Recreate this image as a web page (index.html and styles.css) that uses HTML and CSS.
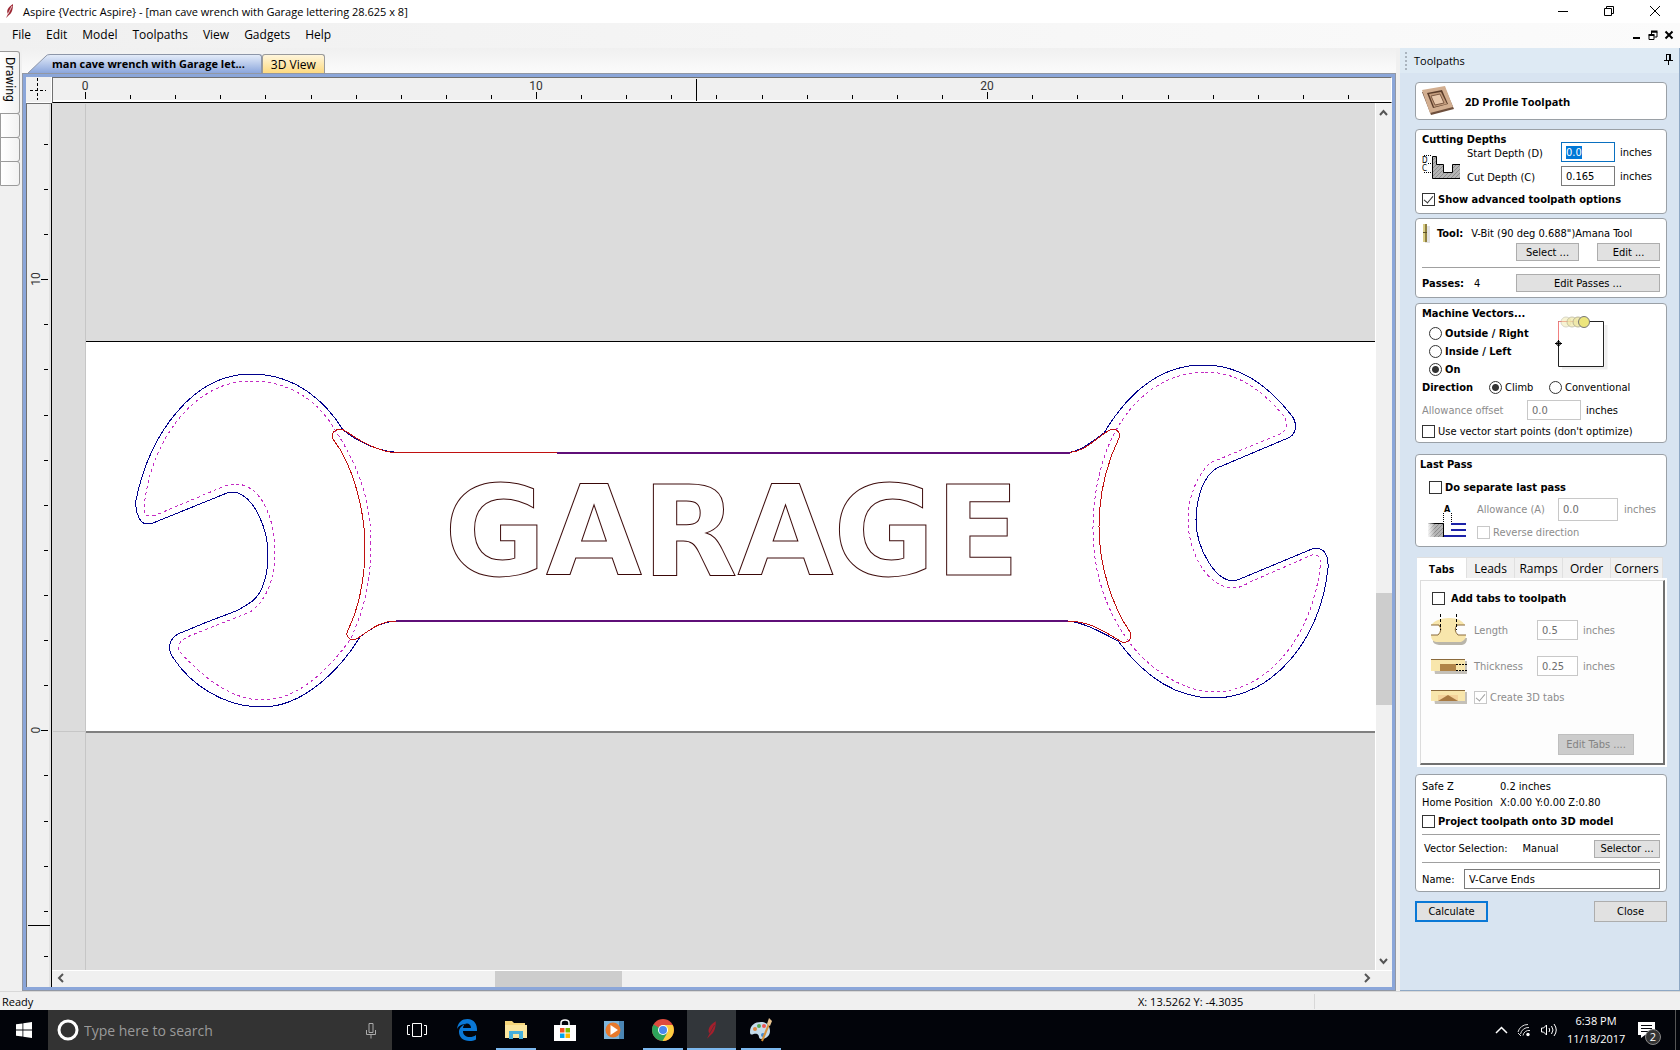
FILE: index.html
```html
<!DOCTYPE html>
<html lang="en">
<head>
    <meta charset="utf-8">
    <title>Aspire</title>
    <link rel="stylesheet" href="styles.css">
</head>
<body>

    <header class="titlebar">
        <svg class="app-icon" width="8" height="14" viewBox="0 0 8 14"><path d="M7 0C2 3 0 7 2 10L0 14 3 11C6 9 7 5 7 0Z" fill="#9c2733"/><path d="M6 2L2 10" stroke="#e8c4c8"/></svg>
        <span class="title">Aspire {Vectric Aspire} - [man cave wrench with Garage lettering 28.625 x 8]</span>
        <button class="win-btn" aria-label="Minimize"><svg width="12" height="12"><path d="M1 6.500H11" stroke="#000"/></svg></button>
        <button class="win-btn" aria-label="Restore"><svg width="12" height="12"><path d="M1.500 3.500h7v7h-7zM3.500 3.500v-2h7v7h-2" fill="none" stroke="#000"/></svg></button>
        <button class="win-btn" aria-label="Close"><svg width="12" height="12"><path d="M1 1L11 11M11 1L1 11" stroke="#000"/></svg></button>
    </header>

    <nav class="menubar">
        <a href="#">File</a>
        <a href="#">Edit</a>
        <a href="#">Model</a>
        <a href="#">Toolpaths</a>
        <a href="#">View</a>
        <a href="#">Gadgets</a>
        <a href="#">Help</a>
        <div class="mdi">
            <button aria-label="Minimize drawing"><svg width="10" height="10"><path d="M1 8H8" stroke="#000" stroke-width="2"/></svg></button>
            <button aria-label="Restore drawing"><svg width="10" height="10"><path d="M1 5.500h5v4h-5zM3.500 5V2H9v5H6.500" fill="none" stroke="#000"/><path d="M3 1.500H9.500M.5 5H6.500" stroke="#000" stroke-width="2"/></svg></button>
            <button aria-label="Close drawing"><svg width="10" height="10"><path d="M1.500 1.500L8.500 8.500M8.500 1.500L1.500 8.500" stroke="#000" stroke-width="2"/></svg></button>
        </div>
    </nav>

    <main class="workspace">

        <aside class="side-tabs">
            <button class="side-tab drawing">Drawing</button>
            <button class="side-tab" aria-label="Modeling"></button>
            <button class="side-tab" aria-label="Clipart"></button>
            <button class="side-tab" aria-label="Layers"></button>
        </aside>

        <section class="document">
            <div class="doc-tabs">
                <button class="doc-tab active">
                    <svg class="tab-slope" width="22" height="19"><defs><linearGradient id="blue" x2="0" y2="1"><stop offset="0" stop-color="#e4ecf9"/><stop offset="1" stop-color="#8ba6dc"/></linearGradient></defs><path d="M0 19L18 2Q19 .5 22 .5V19Z" fill="url(#blue)"/><path d="M0 19L18 2Q19 .5 22 .5" fill="none" stroke="#8d96a8"/></svg>
                    <span>man cave wrench with Garage let...</span>
                </button>
                <button class="doc-tab yellow">3D View</button>
            </div>

            <div class="frame">
                <div class="corner">
                    <svg width="25" height="25"><path d="M11.500 1v22M4 13.500h16" stroke="#000" stroke-dasharray="3 2"/></svg>
                </div>
                <div class="ruler-h">
                    <svg class="fill">
                        <path class="tick" d="M33.500 15v7M78.500 18v4M123.500 18v4M168.500 18v4M213.500 18v4M259.500 18v4M304.500 18v4M349.500 18v4M394.500 18v4M439.500 18v4M484.500 15v7M529.500 18v4M574.500 18v4M619.500 18v4M664.500 18v4M710.500 18v4M755.500 18v4M800.500 18v4M845.500 18v4M890.500 18v4M935.500 15v7M980.500 18v4M1025.500 18v4M1070.500 18v4M1116.500 18v4M1161.500 18v4M1206.500 18v4M1251.500 18v4M1296.500 18v4M644.500 2v22"/>
                        <text x="33" y="13">0</text>
                        <text x="484" y="13">10</text>
                        <text x="935" y="13">20</text>
                    </svg>
                </div>
                <div class="ruler-v">
                    <svg class="fill">
                        <path class="tick" d="M18 41.500h4M18 86.500h4M18 131.500h4M15 176.500h7M18 221.500h4M18 266.500h4M18 312.500h4M18 357.500h4M18 402.500h4M18 447.500h4M18 492.500h4M18 537.500h4M18 582.500h4M15 627.500h7M18 672.500h4M18 718.500h4M18 763.500h4M18 808.500h4M18 853.500h4M2 822.500h22"/>
                        <text transform="translate(14 176) rotate(-90)">10</text>
                        <text transform="translate(14 627) rotate(-90)">0</text>
                    </svg>
                </div>
                <div class="canvas">
                    <svg class="fill">
                        <g transform="translate(-52 -103)">
                            <!-- material sheet and origin lines -->
                            <path d="M53 731.500H86M85.500 104V2000" stroke="#c6c6c6"/>
                            <rect x="86" y="341" width="1500" height="391" fill="#fff"/>
                            <path d="M86 341.500H1600" stroke="#000"/>
                            <path d="M86 732H1600" stroke="#808080" stroke-width="2"/>
                            <!-- wrench outline -->
                            <g class="outline">
                                <path d="M394 452C374 450 356 440 343 430C326 402 296 374 251 374C193 374 150 433 136 500C135 515 141 524 147 524Q150 524 153 523L227 493Q232 491 238 493C256 500 268 530 268 555C268 580 260 598 248 604Q242 608 236 611L207 622 178 634C168 640 167 650 174 659C190 683 222 707 262 707C303 707 340 670 360 637C371 628 384 621 398 621"/>
                                <path d="M1068 452.500C1082 451 1094 440 1104 433C1125 398 1157 365 1203 365C1243 365 1270 388 1292 416C1298 424 1296 435 1288 438L1217 468C1203 476 1196 499 1196 520C1196 548 1215 581 1234 581L1240 579 1312 549C1322 546 1329 553 1328 568C1321 640 1272 698 1214 698C1170 698 1138 668 1118 641C1104 634 1085 622 1066 621"/>
                            </g>
                            <!-- inset pass -->
                            <g class="inset">
                                <path d="M250 381C296 381 322 407 335 430C358 465 371 500 371 545C371 585 362 615 350 640C330 667 300 700 262 700C230 700 201 675 180 652Q175 644 187 637L250 612C268 600 275 575 275 552C275 520 262 484 235 484Q228 484 220 488L156 515Q144 519 144 508C150 440 195 381 250 381Z"/>
                                <path d="M1205 372C1240 372 1264 393 1283 415Q1292 428 1280 434L1210 463C1195 478 1188 500 1188 520C1188 550 1206 588 1234 588Q1240 588 1250 582L1312 555Q1322 553 1320 568C1311 640 1265 692 1214 692C1180 692 1145 664 1130 643C1105 610 1093 570 1093 530C1093 495 1100 460 1115 432C1135 395 1168 372 1205 372Z"/>
                            </g>
                            <!-- handle -->
                            <g class="handle">
                                <path d="M558 452.500H394C376 451 360 441 347 432C339 426 330 431 333 439C353 465 365 510 365 548C365 580 358 610 348 630C344 638 352 642 358 638C370 630 380 621 396 621"/>
                                <path d="M1068 452.500C1086 452 1098 436 1110 430C1116 428 1121 432 1119 438C1106 465 1099 492 1099 527C1099 565 1112 606 1130 632C1133 638 1128 644 1122 642C1104 632 1092 621 1066 621"/>
                            </g>
                            <path d="M557 453H1070M396 621H1068" stroke="#5f0f78" stroke-width="2"/>
                            <text class="lettering" x="732" y="575">GARAGE</text>
                        </g>
                    </svg>
                </div>
                <div class="scroll-v">
                    <svg width="16" height="18"><path d="M4 12L7.500 8 11 12" fill="none" stroke="#555" stroke-width="2"/></svg>
                    <div class="thumb-v"></div>
                    <svg class="down" width="16" height="18"><path d="M4 7L7.500 11 11 7" fill="none" stroke="#555" stroke-width="2"/></svg>
                </div>
                <div class="scroll-h">
                    <svg width="17" height="16"><path d="M11 3L7 7 11 11" fill="none" stroke="#555" stroke-width="2"/></svg>
                    <div class="thumb-h"></div>
                    <svg class="right" width="17" height="16"><path d="M6 3L10 7 6 11" fill="none" stroke="#555" stroke-width="2"/></svg>
                </div>
            </div>
        </section>

        <section class="panel">
            <div class="panel-head">
                <span class="grip"></span>
                <span>Toolpaths</span>
                <svg class="pin" width="9" height="11"><path d="M2.500 0v6M6 0v6M2 .5h5M0 6.500h9M4.500 7v4" stroke="#000" fill="none"/><path d="M6 0v6" stroke="#000" stroke-width="2"/></svg>
            </div>

            <form class="panel-body" onsubmit="return false">

                <div class="card heading-card">
                    <svg width="34" height="30" viewBox="0 0 34 30"><path d="M1 6L24 2 33 23 10 29Z" fill="#6e4f3c"/><path d="M1 4L24 0 32 21 9 27Z" fill="#d2ae90"/><path d="M6 7L21 4 27 18 12 22Z" fill="#5a3c2a"/><path d="M8 8L20 6 26 18 13 21Z" fill="#c39c7d"/><path d="M10 10L19 8 23 17 14 19Z" fill="#e8c8ac" stroke="#7d5a44"/></svg>
                    <b>2D Profile Toolpath</b>
                </div>

                <div class="card depths">
                    <b class="card-title">Cutting Depths</b>
                    <div class="depth-grid">
                        <svg class="depth-icon" width="38" height="24" viewBox="0 0 38 24">
                            <defs><pattern id="hatch" width="4" height="4" patternUnits="userSpaceOnUse"><rect width="4" height="4" fill="#b4b4b4"/><path d="M-1 5L5-1" stroke="#8c8c8c"/></pattern></defs>
                            <path d="M10.500 1.500h4v8h7v8h9v-8h8v14h-28z" fill="url(#hatch)"/><path d="M38 23.500H10.500V1.500h4v8h7v8h9v-8h8" fill="none" stroke="#000"/>
                            <path d="M2 .5H10M6 8.500H10M2 17.500H10" stroke="#000" stroke-dasharray="1 1"/><text x="0" y="8">D</text><text x="0" y="16">C</text></svg>
                        <label for="start">Start Depth (D)</label><input type="text" id="start" value="0.0"><span>inches</span>
                        <label for="cut">Cut Depth (C)</label><input type="text" id="cut" value="0.165"><span>inches</span>
                    </div>
                    <label class="check"><input type="checkbox" checked><b>Show advanced toolpath options</b></label>
                </div>

                <div class="card tool">
                    <div class="tool-row">
                        <svg width="8" height="19"><rect x="3" y="2" width="5" height="17" fill="#e2e2e2"/><rect x="1" width="4" height="18" fill="#8f8040"/><rect x="1" width="2" height="18" fill="#d9cd86"/><path d="M1 8.500h4" stroke="#5d5328"/></svg>
                        <b>Tool:</b><span>V-Bit (90 deg 0.688")Amana Tool</span>
                    </div>
                    <div class="tool-buttons"><button>Select ...</button><button>Edit ...</button></div>
                    <hr>
                    <div class="passes"><b>Passes:</b><span>4</span><button>Edit Passes ...</button></div>
                </div>

                <div class="card vectors">
                    <div class="vector-top">
                        <div>
                            <b class="card-title">Machine Vectors...</b>
                            <label class="check"><input type="radio" name="side"><b>Outside / Right</b></label>
                            <label class="check"><input type="radio" name="side"><b>Inside / Left</b></label>
                            <label class="check"><input type="radio" name="side" checked><b>On</b></label>
                        </div>
                        <svg width="56" height="56"><path d="M8 53h44V10" fill="none" stroke="#eee" stroke-width="3"/><path d="M4.500 6.500h45v45h-45z" fill="#fff" stroke="#222"/><path d="M4.500 28V6.500H26" fill="none" stroke="#f08080"/><g fill="#f0e9a8" stroke="#b5b090"><circle cx="12" cy="7" r="5" opacity=".5"/><circle cx="18" cy="7" r="5" opacity=".7"/><circle cx="24" cy="7" r="5" opacity=".9"/></g><circle cx="30" cy="7" r="5.500" fill="#ece57c" stroke="#777"/><path d="M1 28.500h7M4.500 25v7" stroke="#000"/><circle cx="4.500" cy="28.500" r="2" fill="none" stroke="#000"/></svg>
                    </div>
                    <div class="direction">
                        <b>Direction</b>
                        <label class="check"><input type="radio" name="dir" checked>Climb</label>
                        <label class="check"><input type="radio" name="dir">Conventional</label>
                    </div>
                    <div class="offset"><label class="dim" for="offset">Allowance offset</label><input type="text" id="offset" value="0.0" disabled><span>inches</span></div>
                    <label class="check"><input type="checkbox">Use vector start points (don't optimize)</label>
                </div>

                <div class="card last-pass">
                    <b class="card-title">Last Pass</b>
                    <label class="check"><input type="checkbox"><b>Do separate last pass</b></label>
                    <div class="pass-grid">
                        <svg class="pass-icon" width="40" height="34"><defs><linearGradient id="fade"><stop offset="0" stop-color="#fff"/><stop offset=".5" stop-color="#fff" stop-opacity="0"/></linearGradient></defs><rect x="1" y="19" width="16" height="14" fill="url(#hatch)"/><path d="M1 19.500H16.500V33" fill="none" stroke="#000"/><rect x="0" y="18" width="16" height="16" fill="url(#fade)"/><path d="M16.500 9v10M24.500 9v10" stroke="#000" stroke-dasharray="1 1"/><path d="M24 20H39M24 26H39M17 32H39" stroke="#1c22a8" stroke-width="2"/><text x="17" y="8">A</text></svg>
                        <label class="dim" for="allow">Allowance (A)</label><input type="text" id="allow" value="0.0" disabled><span class="dim">inches</span>
                        <label class="check dim reverse"><input type="checkbox" disabled>Reverse direction</label>
                    </div>
                </div>

                <div class="tabs">
                    <div class="tab-strip">
                        <button class="selected">Tabs</button><button>Leads</button><button>Ramps</button><button>Order</button><button>Corners</button>
                    </div>
                    <div class="tab-frame">
                        <div class="tab-page">
                            <label class="check add"><input type="checkbox"><b>Add tabs to toolpath</b></label>
                            <div class="tab-grid">
                                <svg width="38" height="32" viewBox="0 0 38 32"><path d="M3 26Q2 30 9 31H32Q37 30 37 24Z" fill="#b9b5aa"/><path d="M1 11Q5 5 18 4Q30 3 35 11H28Q23 16 28 21H36Q36 26 31 28H6Q1 27 1 21H8Q12 16 8 11Z" fill="#f8e6ac"/><path d="M1 11H9Q13 16 8 21H1M35 11H27Q23 16 28 21H36" fill="none" stroke="#8a6a3c"/><path d="M10.500 0v16M26.500 0v16" stroke="#000" stroke-dasharray="3 2"/></svg>
                                <label class="dim" for="len">Length</label><input type="text" id="len" value="0.5" disabled><span class="dim">inches</span>
                                <svg width="38" height="17" viewBox="0 0 38 17"><path d="M3 3H37V16H5Z" fill="#c4c0b8"/><path d="M1 1H35V13H1Z" fill="#f8e6ac"/><path d="M1 1.500H35" stroke="#8a6a3c"/><path d="M10 6H26V13H10Z" fill="#b08448"/><path d="M26 6.500H38M26 12.500H38" stroke="#000" stroke-dasharray="2 1"/></svg>
                                <label class="dim" for="thick">Thickness</label><input type="text" id="thick" value="0.25" disabled><span class="dim">inches</span>
                                <svg width="38" height="17" viewBox="0 0 38 17"><path d="M3 3H37V15H5Z" fill="#c4c0b8"/><path d="M1 1H35V12H1Z" fill="#f8e6ac"/><path d="M1 1.500H35" stroke="#8a6a3c"/><path d="M8 6H28V12H8Z" fill="#f3d29a"/><path d="M8 12L18 6 28 12Z" fill="#a87a42"/></svg>
                                <label class="check dim wide"><input type="checkbox" checked disabled>Create 3D tabs</label>
                            </div>
                            <button class="edit-tabs" disabled>Edit Tabs ....</button>
                        </div>
                    </div>
                </div>

                <div class="card summary">
                    <div class="pair"><span>Safe Z</span><span>0.2 inches</span></div>
                    <div class="pair"><span>Home Position</span><span>X:0.00 Y:0.00 Z:0.80</span></div>
                    <label class="check"><input type="checkbox"><b>Project toolpath onto 3D model</b></label>
                    <hr>
                    <div class="selection"><span>Vector Selection:</span><span>Manual</span><button>Selector ...</button></div>
                    <hr>
                    <div class="name-row"><label for="name">Name:</label><input type="text" id="name" value="V-Carve Ends"></div>
                </div>

                <div class="actions"><button class="primary">Calculate</button><button>Close</button></div>
            </form>
        </section>
    </main>

    <footer class="statusbar">
        <span>Ready</span>
        <span class="coords">X: 13.5262 Y: -4.3035</span>
    </footer>

    <div class="taskbar">
        <button class="start" aria-label="Start"><svg width="16" height="16"><path d="M0 2.300L6.500 1.400V7.600H0zM7.300 1.300L16 0V7.600H7.300zM0 8.400H6.500V14.600L0 13.700zM7.300 8.400H16V16L7.300 14.700z" fill="#fff"/></svg></button>
        <div class="search">
            <svg width="22" height="22"><circle cx="11" cy="11" r="9" fill="none" stroke="#fff" stroke-width="3"/></svg>
            <input type="text" placeholder="Type here to search" aria-label="Search">
            <svg width="12" height="17"><path d="M4 1.500h4v9h-4zM1.500 8v4.500h9V8M6 12.500v4" fill="none" stroke="#aaa"/></svg>
        </div>
        <button class="task view" aria-label="Task View"><svg width="20" height="16"><path d="M5.500 1.500h9v13h-9zM3 3.500H.5v9H3M17 3.500h2.500v9H17" fill="none" stroke="#fff"/></svg></button>
        <button class="task" aria-label="Edge"><svg width="22" height="22" viewBox="0 0 22 22"><path d="M1 10C2 3 6 0 11.500 0 18 0 21.500 5 21 12H7C7 16 10 18 14 18 16 18 18 17.500 20 16V20.500C18 21.500 16 22 13.500 22 7 22 3 18 3 13 3 9 6 6 10 5 7 5 3 6 1 10ZM7 9H15C15 6 13 4.500 11 4.500S7 6.500 7 9Z" fill="#0a78d6"/></svg></button>
        <button class="task open" aria-label="File Explorer"><svg width="22" height="20"><path d="M0 1H7L9 3H20V17H0Z" fill="#f5d67b"/><path d="M0 5H22V18H0Z" fill="#fbe69e"/><path d="M4 11H18V19H14V14H8V19H4Z" fill="#46b0dc"/></svg></button>
        <button class="task" aria-label="Store"><svg width="22" height="22"><path d="M7 6V4Q7 1 11 1T15 4V6" fill="none" stroke="#fff" stroke-width="1.500"/><path d="M0 6H22V22H0Z" fill="#fff"/><path d="M6 9h4.500v4.500H6z" fill="#f25022"/><path d="M11.500 9H16v4.500h-4.500z" fill="#7fba00"/><path d="M6 14.500h4.500V19H6z" fill="#00a4ef"/><path d="M11.500 14.500H16V19h-4.500z" fill="#ffb900"/></svg></button>
        <button class="task" aria-label="Media Player"><svg width="20" height="20"><path d="M0 1H20V19H0Z" fill="#7fb5da"/><path d="M15 1h5v18h-5z" fill="#4b86b4"/><circle cx="9" cy="10" r="7.500" fill="#e8792b"/><path d="M6.500 5L14 10 6.500 15Z" fill="#fff"/></svg></button>
        <button class="task open" aria-label="Chrome"><svg width="22" height="22" viewBox="0 0 22 22"><circle cx="11" cy="11" r="11" fill="#dd4b3e"/><path d="M11 11L1.500 5.500A11 11 0 0 0 11 22L16 13Z" fill="#2da35a"/><path d="M11 11L20.700 6A11 11 0 0 1 10.500 22L15.500 13.500Z" fill="#fccd3f"/><path d="M11 6h9.700L16 11Z" fill="#fccd3f"/><circle cx="11" cy="11" r="5" fill="#fff"/><circle cx="11" cy="11" r="4" fill="#4a88ee"/></svg></button>
        <button class="task open current" aria-label="Aspire"><svg width="10" height="20" viewBox="0 0 8 14"><path d="M7 0C2 3 0 7 2 10L0 14 3 11C6 9 7 5 7 0Z" fill="#a51f2c"/><path d="M6 3L2 10" stroke="#32363a" stroke-width=".5"/></svg></button>
        <button class="task open" aria-label="Paint"><svg width="24" height="24"><path d="M1 14C1 7 6 4 12 4S21 8 21 13 17 21 12 21C9 21 11 17 8 16S1 19 1 14Z" fill="#c4dcec"/><circle cx="6" cy="11" r="2" fill="#d84"/><circle cx="10" cy="8" r="2" fill="#5a5"/><circle cx="15" cy="8" r="2" fill="#e55"/><circle cx="14" cy="17" r="2" fill="#48c"/><path d="M13 23L20 6" stroke="#d8923a" stroke-width="2"/><path d="M18 6L20 0 23 3 21 8Z" fill="#e8c490"/></svg></button>
        <div class="tray">
            <svg width="13" height="8"><path d="M1 7L6.500 1.500 12 7" fill="none" stroke="#fff" stroke-width="1.500"/></svg>
            <svg width="14" height="14"><path d="M1 9A10 10 0 0 1 11 1.500M3.500 11A8 8 0 0 1 12 4.500M6 12.500A6 6 0 0 1 13 7.500M1 10L4 13" fill="none" stroke="#ddd"/><circle cx="11" cy="11.500" r="1.700" fill="#fff"/></svg>
            <svg width="18" height="14"><path d="M1.500 5h2l3-3v10l-3-3h-2z" fill="none" stroke="#fff"/><path d="M9 5q1.500 2 0 4M11.500 3q3 4 0 8M14 1q4.500 6 0 12" fill="none" stroke="#fff"/></svg>
            <div class="clock">6:38 PM<br>11/18/2017</div>
            <div class="notify">
                <svg width="18" height="17"><path d="M0 0H17V13H7L3 16V13H0Z" fill="#fff"/><path d="M3 3.500H14M3 6.500H14M3 9.500H10" stroke="#05060c"/></svg>
                <span class="badge">2</span>
            </div>
        </div>
    </div>

    <script>
        // Start depth is ready to be typed over
        const start = document.getElementById('start');
        start.focus();
        start.select();
    </script>
</body>
</html>
```
FILE: styles.css
```css
* {
    box-sizing: border-box;
}
body {
    margin: 0;
    height: 100vh;
    display: flex;
    flex-direction: column;
    overflow: hidden;
    background-color: #f0f0f0;
    font-family: "Open Sans", sans-serif;
    font-size: 11px;
    color: #000;
}
button,
input {
    font: inherit;
    color: inherit;
    margin: 0;
    padding: 0;
}
svg {
    display: block;
    flex: none;
}

/* title and menu */
.titlebar {
    height: 23px;
    flex: none;
    display: flex;
    align-items: center;
    background-color: #fff;
    padding: 0 2px 1px 6px;
}
.title {
    flex: 1;
    margin-left: 9px;
}
.win-btn {
    width: 46px;
    height: 20px;
    border: none;
    background: none;
    display: flex;
    justify-content: center;
    align-items: center;
}
.menubar {
    height: 25px;
    flex: none;
    display: flex;
    align-items: center;
    gap: 15px;
    padding: 0 6px 2px 12px;
    font-size: 12px;
    background: linear-gradient(to right, #f0f0f0, #fbfbfb);
}
.menubar a {
    color: #000;
    text-decoration: none;
}
.mdi {
    margin-left: auto;
    display: flex;
    gap: 6px;
}
.mdi button {
    border: none;
    background: none;
}

/* workspace */
.workspace {
    flex: 1;
    min-height: 0;
    display: flex;
}
.side-tabs {
    width: 20px;
    padding-top: 3px;
    margin-right: 2px;
}
.side-tab {
    display: block;
    width: 20px;
    height: 25px;
    margin-bottom: -1px;
    border: 1px solid #9a9a9a;
    border-radius: 0 3px 3px 0;
    background: linear-gradient(to right, #fff, #f2f2f2);
}
.side-tab.drawing {
    height: 63px;
    padding-bottom: 6px;
    border-left: none;
    writing-mode: vertical-rl;
    font-family: "DejaVu Sans Condensed", sans-serif;
    font-size: 12px;
}
.document {
    flex: 1;
    min-width: 0;
    display: flex;
    flex-direction: column;
    background: linear-gradient(#f0f0f0, #fbfbfb 25px, #f0f0f0 26px);
}
.doc-tabs {
    height: 25px;
    flex: none;
    display: flex;
    align-items: flex-end;
    padding-left: 6px;
}
.doc-tab {
    height: 19px;
    display: flex;
    align-items: center;
    border: none;
    background: none;
}
.doc-tab.active {
    font-weight: bold;
}
.doc-tab.active span {
    height: 19px;
    line-height: 18px;
    padding: 0 16px 0 2px;
    border-top: 1px solid #8d96a8;
    border-right: 1px solid #8d96a8;
    border-radius: 0 3px 0 0;
    background: linear-gradient(#e4ecf9, #8ba6dc);
}
.doc-tab.yellow {
    padding: 0 8px;
    border: 1px solid #9a9a9a;
    border-bottom: none;
    border-radius: 3px 3px 0 0;
    background: linear-gradient(#fff6dc, #fdda80);
    font-size: 12px;
}
.frame {
    flex: 1;
    min-height: 0;
    display: grid;
    grid-template-columns: 26px 1fr 17px;
    grid-template-rows: 26px 1fr 17px;
    border: 4px solid #8ba6d9;
    outline: 1px solid #9298a4;
    outline-offset: -1px;
    background-color: #f0f0f0;
}
.fill {
    width: 100%;
    height: 100%;
}
.corner {
    border-right: 1px solid #fff;
    border-bottom: 1px solid #fff;
}
.ruler-h {
    grid-column: 2 / 4;
    border-top: 1px solid #707070;
    border-left: 1px solid #707070;
    border-right: 1px solid #fff;
    border-bottom: 1px solid #000;
    box-shadow: inset 0 -2px #fff;
    overflow: hidden;
}
.ruler-v {
    grid-row: 2 / 4;
    border-left: 1px solid #707070;
    border-top: 1px solid #707070;
    border-right: 1px solid #000;
    box-shadow: inset -2px 0 #e2e2e2;
    overflow: hidden;
}
.ruler-h svg,
.ruler-v svg {
    margin: -1px 0 0 -1px;
    font-family: Roboto, sans-serif;
    font-size: 12px;
    fill: #333;
    text-anchor: middle;
}
.tick {
    stroke: #000;
    fill: none;
}
.canvas {
    background-color: #dcdcdc;
    overflow: hidden;
}
.outline,
.inset,
.handle {
    fill: none;
    stroke-width: 1;
    shape-rendering: crispEdges;
}
.outline {
    stroke: #00008c;
}
.inset {
    stroke: #c32cc3;
    stroke-dasharray: 3 3;
}
.handle {
    stroke: #c01010;
}
.lettering {
    font-family: "DejaVu Sans", sans-serif;
    font-weight: bold;
    font-size: 124px;
    text-anchor: middle;
    fill: none;
    stroke: #3a0808;
}
.scroll-v {
    display: flex;
    flex-direction: column;
    border-left: 1px solid #fff;
}
.thumb-v {
    height: 112px;
    margin-top: 472px;
    background-color: #cdcdcd;
}
.down {
    margin-top: auto;
}
.scroll-h {
    grid-column: 2 / 4;
    display: flex;
    border-top: 1px solid #fff;
}
.thumb-h {
    width: 127px;
    margin-left: 426px;
    background-color: #cdcdcd;
}
.right {
    margin-left: auto;
    margin-right: 16px;
}

/* toolpaths panel */
.panel {
    width: 280px;
    margin-left: 4px;
    flex: none;
    background-color: #d8e4f1;
    border-right: 1px solid #8fa8c4;
    border-bottom: 1px solid #8fa8c4;
    font-family: "DejaVu Sans Condensed", sans-serif;
}
.panel-head {
    height: 25px;
    display: flex;
    align-items: center;
    padding: 0 6px 0 5px;
    background-color: #deeaf4;
    font-family: "Open Sans", sans-serif;
}
.grip {
    width: 2px;
    height: 18px;
    margin-right: 7px;
    background: repeating-linear-gradient(#aab4be 0 2px, transparent 2px 4px);
}
.pin {
    margin: 0 0 3px auto;
}
.panel-body {
    padding: 9px 12px 0 15px;
}
.card {
    border: 1px solid #9aa0a6;
    border-radius: 4px;
    background-color: #fff;
    padding: 3px 6px;
}
.card-title {
    display: block;
    line-height: 14px;
}
.panel input[type="text"] {
    min-width: 0;
    height: 20px;
    padding: 0 4px;
    border: 1px solid #7a7a7a;
    border-radius: 0;
    background-color: #fff;
    outline: none;
}
.panel input[type="text"]:focus {
    border-color: #0a70c0;
}
.panel input[type="text"]:disabled {
    border-color: #c8c8c8;
    color: #6d6d6d;
}
.panel input::selection {
    background-color: #0078d7;
    color: #fff;
}
.panel button {
    height: 18px;
    border: 1px solid #adadad;
    background-color: #e1e1e1;
}
.dim {
    color: #8c8c8c;
}
.panel hr {
    margin: 0;
    border: none;
    border-top: 1px solid #a0a0a0;
}
.check {
    display: flex;
    align-items: center;
    gap: 3px;
    white-space: nowrap;
}
.check input {
    appearance: none;
    flex: none;
    width: 13px;
    height: 13px;
    border: 1px solid #333;
    background-color: #fff;
}
.check input[type="radio"] {
    border-radius: 50%;
}
.check input[type="radio"]:checked {
    background: radial-gradient(#333 0 3px, #fff 4px);
}
.check input[type="checkbox"]:checked::before {
    content: "";
    display: block;
    width: 4px;
    height: 8px;
    margin: 0 0 0 3px;
    border: solid #333;
    border-width: 0 1px 1px 0;
    transform: rotate(40deg);
}
.check input:disabled {
    border-color: #c8c8c8;
}
.check input[type="checkbox"]:disabled::before {
    border-color: #a0a0a0;
}

.heading-card {
    height: 38px;
    display: flex;
    align-items: center;
    gap: 10px;
    padding: 0 5px;
    font-family: "Open Sans", sans-serif;
}
.depths {
    height: 85px;
    margin-top: 9px;
}
.depth-grid {
    display: grid;
    grid-template-columns: 45px 94px 54px 1fr;
    grid-template-rows: 20px 20px;
    row-gap: 4px;
    align-items: center;
    margin: -5px 0 7px;
}
.depth-grid label {
    padding-top: 3px;
}
.depth-grid span,
.offset span,
.tab-grid span {
    padding-left: 5px;
}
.depth-icon {
    grid-row: 1 / 3;
    align-self: end;
    margin-bottom: 7px;
    font-size: 8px;
}
.tool {
    height: 80px;
    margin-top: 4px;
    padding-top: 4px;
}
.tool-row {
    display: flex;
    align-items: center;
    height: 20px;
    gap: 7px;
}
.tool-row span {
    margin-left: 1px;
    white-space: nowrap;
}
.tool-buttons {
    display: flex;
    justify-content: flex-end;
    gap: 18px;
    margin-bottom: 6px;
}
.tool-buttons button {
    width: 63px;
}
.passes {
    display: flex;
    align-items: center;
    gap: 10px;
    margin-top: 6px;
}
.passes button {
    width: 144px;
    margin-left: auto;
}
.vectors {
    height: 140px;
    margin-top: 5px;
}
.vector-top {
    display: flex;
    gap: 27px;
    height: 71px;
}
.vector-top > div {
    width: 105px;
}
.vector-top .check {
    margin-left: 7px;
    height: 18px;
}
.vector-top .card-title {
    margin-bottom: 3px;
}
.vector-top svg {
    margin-top: 8px;
}
.direction {
    display: flex;
    align-items: center;
    height: 18px;
}
.direction b {
    width: 67px;
}
.direction .check {
    width: 60px;
}
.offset {
    display: grid;
    grid-template-columns: 105px 54px 1fr;
    align-items: center;
    margin: 4px 0 5px;
}
.last-pass {
    height: 93px;
    margin-top: 11px;
}
.last-pass .card-title {
    margin: 0 0 9px -2px;
}
.last-pass > .check {
    margin-left: 7px;
}
.pass-grid {
    display: grid;
    grid-template-columns: 50px 81px 60px 1fr;
    grid-template-rows: 23px 22px;
    align-items: center;
    margin: 4px 0 0 5px;
}
.pass-grid input[type="text"] {
    height: 23px;
}
.pass-grid span {
    padding-left: 6px;
}
.pass-icon {
    grid-row: 1 / 3;
    font-size: 9px;
    font-weight: bold;
}
.reverse {
    grid-column: 2 / 5;
}

.tabs {
    margin-top: 10px;
}
.tab-strip {
    display: flex;
    padding-left: 2px;
    font-family: "Open Sans", sans-serif;
    font-size: 12px;
}
.panel .tab-strip button {
    width: 48px;
    height: 21px;
    background-color: #f0f0f0;
    border: 1px solid #e0e0e0;
    border-left: none;
    border-bottom: none;
}
.panel .tab-strip button:last-child {
    width: 52px;
}
.panel .tab-strip .selected {
    width: 50px;
    background-color: #fff;
    font-size: 11px;
    font-weight: bold;
}
.tab-frame {
    margin-left: 2px;
    padding: 2px 2px 2px 3px;
    background-color: #fff;
}
.tab-page {
    height: 185px;
    padding: 11px 11px 0 9px;
    border: 1px solid #dcdcdc;
    border-right: 2px solid #707070;
    border-bottom: 2px solid #707070;
    background-color: #fdfdfd;
}
.add {
    gap: 6px;
    margin-left: 2px;
}
.tab-grid {
    display: grid;
    grid-template-columns: 44px 63px 41px 1fr;
    grid-template-rows: 36px 36px 26px;
    align-items: center;
    margin-top: 7px;
}
.wide {
    grid-column: 2 / 5;
}
.panel .edit-tabs {
    display: block;
    width: 76px;
    height: 21px;
    margin: 24px 18px 0 auto;
    background-color: #cccccc;
    border-color: #bfbfbf;
    color: #838383;
}
.summary {
    height: 118px;
    margin-top: 7px;
    padding-top: 4px;
}
.pair {
    display: grid;
    grid-template-columns: 78px 1fr;
    line-height: 16px;
}
.summary .check {
    margin: 4px 0 6px;
}
.selection {
    display: flex;
    align-items: center;
    height: 27px;
    gap: 15px;
    padding-left: 2px;
}
.selection button {
    width: 66px;
    margin-left: auto;
}
.name-row {
    display: flex;
    align-items: center;
    margin-top: 6px;
}
.name-row label {
    width: 42px;
}
.name-row input {
    flex: 1;
}
.actions {
    display: flex;
    justify-content: space-between;
    margin-top: 9px;
}
.panel .actions button {
    width: 73px;
    height: 21px;
}
.panel .actions .primary {
    border: 2px solid #0a78d6;
}

/* status bar */
.statusbar {
    height: 19px;
    flex: none;
    display: flex;
    align-items: center;
    padding: 0 2px;
    border-top: 1px solid #d8d8d8;
}
.coords {
    width: 177px;
    margin-left: auto;
    margin-right: 363px;
    border-right: 1px solid #d8d8d8;
}

/* taskbar */
.taskbar {
    height: 40px;
    flex: none;
    display: flex;
    background-color: #02040a;
    color: #fff;
}
.taskbar button {
    width: 49px;
    border: none;
    background: none;
    display: flex;
    justify-content: center;
    align-items: center;
}
.taskbar .start {
    width: 48px;
}
.search {
    width: 344px;
    display: flex;
    align-items: center;
    padding: 0 15px 0 9px;
    background-color: #333;
}
.search input {
    flex: 1;
    margin-left: 5px;
    border: none;
    background: none;
    font-size: 14px;
}
.search input::placeholder {
    color: #9a9a9a;
}
.taskbar .view {
    width: 50px;
}
.taskbar .open {
    background: linear-gradient(#7cb8ee, #7cb8ee) bottom / 40px 2px no-repeat;
}
.taskbar .current {
    background-color: #32363a;
    background-size: 49px 2px;
}
.tray {
    margin-left: auto;
    margin-right: 4px;
    padding-right: 19px;
    display: flex;
    align-items: center;
    gap: 9px;
    border-right: 1px solid #555;
}
.clock {
    width: 58px;
    line-height: 18px;
    text-align: center;
}
.notify {
    position: relative;
    margin-left: 4px;
}
.badge {
    position: absolute;
    left: 7px;
    top: 7px;
    width: 16px;
    height: 16px;
    border: 1px solid #888;
    border-radius: 50%;
    background-color: #333;
    line-height: 14px;
    text-align: center;
}
```
